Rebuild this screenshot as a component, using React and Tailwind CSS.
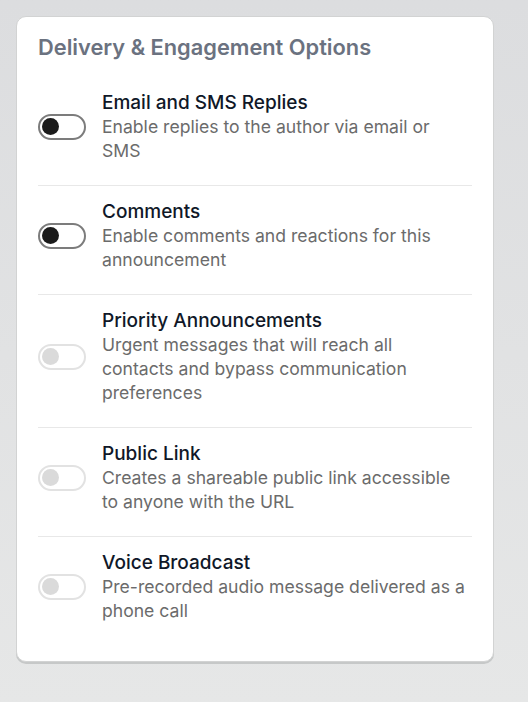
import React, { useState } from 'react';

const OPTIONS = [
  { id: 'replies', label: 'Email and SMS Replies', desc: 'Enable replies to the author via email or SMS', on: false, disabled: false },
  { id: 'comments', label: 'Comments', desc: 'Enable comments and reactions for this announcement', on: false, disabled: false },
  { id: 'priority', label: 'Priority Announcements', desc: 'Urgent messages that will reach all contacts and bypass communication preferences', on: false, disabled: true },
  { id: 'public', label: 'Public Link', desc: 'Creates a shareable public link accessible to anyone with the URL', on: false, disabled: true },
  { id: 'voice', label: 'Voice Broadcast', desc: 'Pre-recorded audio message delivered as a phone call', on: false, disabled: true },
];

function Toggle({ on, disabled, onChange }) {
  return (
    <button
      type="button"
      disabled={disabled}
      onClick={onChange}
      className={`shrink-0 w-12 h-[26px] rounded-full border-2 flex items-center px-[2px] bg-white ${
        disabled ? 'border-[#e2e2e2] cursor-not-allowed' : 'border-[#7c7c7c]'
      } ${on ? 'justify-end' : 'justify-start'}`}
    >
      <span className={`block w-[17px] h-[17px] rounded-full ${disabled ? 'bg-[#dadada]' : 'bg-[#1b1b1b]'}`} />
    </button>
  );
}

export default function App() {
  const [options, setOptions] = useState(OPTIONS);

  const toggle = (id) => {
    setOptions(options.map((o) => (o.id === id ? { ...o, on: !o.on } : o)));
  };

  return (
    <div className="min-h-[702px] w-[528px] bg-gradient-to-b from-[#dcdddf] to-[#e6e7e7] pt-4 pl-4 font-['Inter',sans-serif]">
      <div className="w-[478px] bg-white rounded-[10px] border border-[#d2d3d3] shadow-[0_2px_0_#c6c8c8] px-[21px] pt-4 pb-4">
        <h2 className="text-[21.8px] leading-7 font-semibold text-[#6b7280] mb-4">
          Delivery &amp; Engagement Options
        </h2>
        <div>
          {options.map((o, i) => (
            <div
              key={o.id}
              className={`flex items-center gap-4 pt-[13px] pb-[22px] ${i < options.length - 1 ? 'border-b border-[#e8e8e8]' : ''}`}
            >
              <Toggle on={o.on} disabled={o.disabled} onChange={() => toggle(o.id)} />
              <div className="flex-1 pr-1">
                <div className="text-[19px] leading-[25px] font-medium text-[#101828]">{o.label}</div>
                <div className="text-[17.6px] leading-6 text-[#6b6b6b]">{o.desc}</div>
              </div>
            </div>
          ))}
        </div>
      </div>
    </div>
  );
}
